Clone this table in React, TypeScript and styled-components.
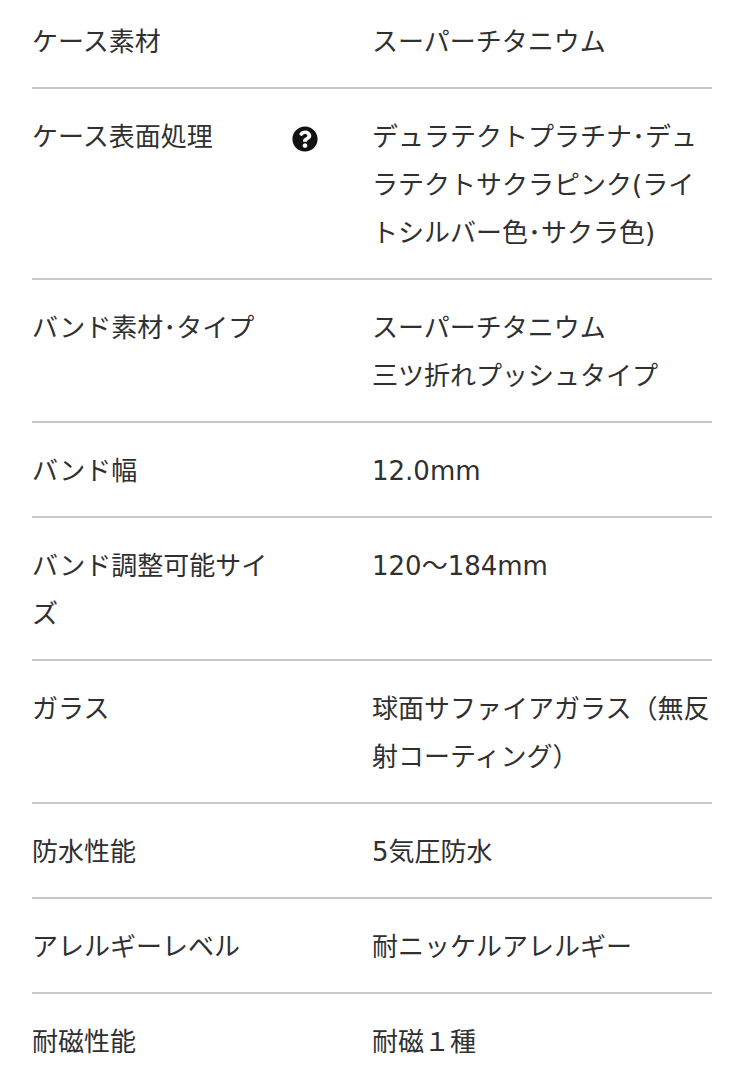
import styled, { createGlobalStyle } from 'styled-components';
import { FaQuestionCircle } from 'react-icons/fa';

const GlobalStyle = createGlobalStyle`
  body {
    margin: 0;
    background: #fff;
    font-family: "DejaVu Sans", "Noto Sans CJK JP", sans-serif;
    color: #303030;
  }
`;

const Table = styled.dl`
  margin: 0 31px 0 32px;
`;

const Row = styled.div`
  display: grid;
  grid-template-columns: 340px 1fr;
  padding: 24px 0 21px;
  border-bottom: 2px solid #c8c8c8;

  &:first-child {
    padding-top: 18px;
  }
`;

const Label = styled.dt`
  display: flex;
  align-items: flex-start;
  margin: 0;
`;

const LabelText = styled.span`
  width: 250px;
  font-size: 26px;
  line-height: 48px;
`;

const HelpIcon = styled(FaQuestionCircle)`
  margin: 13px 0 0 10px;
  width: 26px;
  height: 26px;
  color: #111;
  flex-shrink: 0;
`;

const Value = styled.dd`
  margin: 0;
  font-size: 26px;
  line-height: 48px;
`;

type Spec = { label: string; value: string[]; help?: boolean };

const specs: Spec[] = [
  { label: 'ケース素材', value: ['スーパーチタニウム'] },
  {
    label: 'ケース表面処理',
    value: ['デュラテクトプラチナ･デュラテクトサクラピンク(ライトシルバー色･サクラ色)'],
    help: true,
  },
  { label: 'バンド素材･タイプ', value: ['スーパーチタニウム', '三ツ折れプッシュタイプ'] },
  { label: 'バンド幅', value: ['12.0mm'] },
  { label: 'バンド調整可能サイズ', value: ['120〜184mm'] },
  { label: 'ガラス', value: ['球面サファイアガラス（無反射コーティング）'] },
  { label: '防水性能', value: ['5気圧防水'] },
  { label: 'アレルギーレベル', value: ['耐ニッケルアレルギー'] },
  { label: '耐磁性能', value: ['耐磁１種'] },
];

const App = () => (
  <>
    <GlobalStyle />
    <Table>
      {specs.map((spec) => (
        <Row key={spec.label}>
          <Label>
            <LabelText>{spec.label}</LabelText>
            {spec.help && <HelpIcon />}
          </Label>
          <Value>
            {spec.value.map((line) => (
              <div key={line}>{line}</div>
            ))}
          </Value>
        </Row>
      ))}
    </Table>
  </>
);

export default App;
